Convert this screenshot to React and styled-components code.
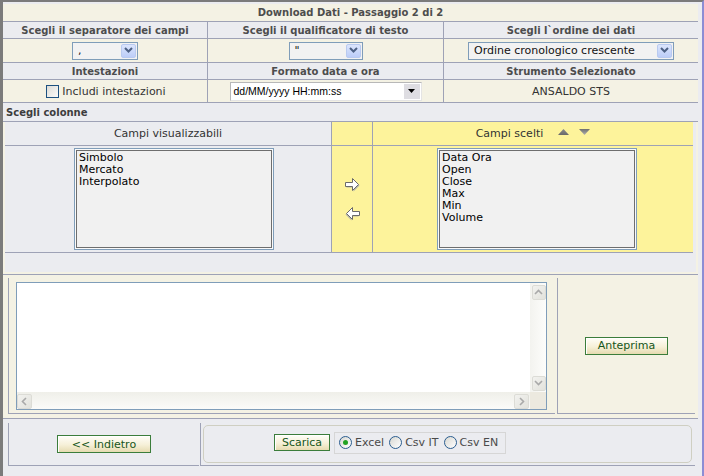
import React from 'react';
import styled, { createGlobalStyle } from 'styled-components';

const GRAY = '#ebecf0';
const CREAM = '#f4f2e4';
const YELLOW = '#fdf39b';
const LINE = '#9ea2b6';

const GlobalStyle = createGlobalStyle`
  *, *::before, *::after { box-sizing: border-box; }
  html, body { margin: 0; padding: 0; background: #fff; }
  body {
    font-family: "DejaVu Sans", Verdana, sans-serif;
    font-size: 11px;
    color: #222;
  }
`;

const Frame = styled.div`
  width: 704px;
  height: 476px;
  overflow: hidden;
  background: ${GRAY};
  border-top: 2px solid #7b7b7b;
  border-left: 3px solid #7b7b7b;
  border-right: 2px solid #8c8dd4;
  padding: 2px 4px 0 0;
  display: flex;
  flex-direction: column;
`;

const Title = styled.div`
  height: 18px;
  flex: none;
  background: ${CREAM};
  border-bottom: 1px solid ${LINE};
  display: flex;
  align-items: center;
  justify-content: center;
  font-weight: bold;
  font-size: 10px;
  color: #4d4d4d;
`;

const Options = styled.div`
  display: grid;
  grid-template-columns: 205px 236px 254px;
  grid-template-rows: 17px 24px 17px 23px;
  flex: none;
`;

const Cell = styled.div`
  display: flex;
  align-items: center;
  justify-content: center;
  gap: 3px;
  background: ${p => (p.$head ? GRAY : CREAM)};
  border-bottom: 1px solid ${LINE};
  border-right: ${p => (p.$last ? 'none' : `1px solid ${LINE}`)};
  font-weight: ${p => (p.$head ? 'bold' : 'normal')};
  font-size: ${p => (p.$head ? '10px' : '11px')};
  color: ${p => (p.$head ? '#4d4d4d' : '#333')};
`;

const XpSelect = styled.div`
  width: ${p => p.$w}px;
  height: 18px;
  border: 1px solid #7f9db9;
  background: #f2f2f2;
  display: flex;
  align-items: center;
  justify-content: space-between;
  padding: 1px 1px 1px 5px;
  font-size: 11px;
  color: #111;
`;

const XpArrow = styled.span`
  width: 15px;
  height: 14px;
  border-radius: 2px;
  border: 1px solid #b9caf0;
  background: linear-gradient(#dbe5fd, #bccdf8);
  display: flex;
  align-items: center;
  justify-content: center;
`;

const ClassicSelect = styled.div`
  width: 192px;
  height: 19px;
  border: 1px solid #b8b8b8;
  border-bottom-color: #e4e4e4;
  border-right-color: #e4e4e4;
  background: #fff;
  display: flex;
  align-items: center;
  justify-content: space-between;
  padding: 1px;
  font-family: "Liberation Sans", Arial, sans-serif;
  font-size: 10.5px;
  color: #000;
  span:first-child { padding-left: 2px; }
`;

const ClassicArrow = styled.span`
  width: 16px;
  height: 100%;
  background: #dedde2;
  display: flex;
  align-items: center;
  justify-content: center;
`;

const Check = styled.span`
  width: 13px;
  height: 13px;
  margin-left: 2px;
  border: 1px solid #1c5180;
  background: linear-gradient(135deg, #dcdcd7, #fbfbf9);
`;

const SectionLabel = styled.div`
  height: 20px;
  flex: none;
  margin-top: -1px;
  border-top: 1px solid ${LINE};
  border-bottom: 1px solid ${LINE};
  padding-left: 3px;
  display: flex;
  align-items: center;
  font-weight: bold;
  font-size: 10px;
  color: #3d3d3d;
`;

const ColumnsBox = styled.div`
  height: 152px;
  flex: none;
  border: 0 solid ${CREAM};
  border-width: 0 2px 2px 2px;
  padding-right: 3px;
`;

const ColumnsTable = styled.div`
  display: grid;
  grid-template-columns: 327px 41px 1fr;
  grid-template-rows: 24px 107px;
`;

const ColCell = styled.div`
  background: ${p => (p.$yellow ? YELLOW : GRAY)};
  border-bottom: 1px solid ${LINE};
  border-right: ${p => (p.$last ? 'none' : `1px solid ${LINE}`)};
  display: flex;
  align-items: center;
  justify-content: ${p => p.$justify || 'center'};
  flex-direction: ${p => p.$dir || 'row'};
  gap: ${p => p.$gap || 0}px;
  padding-left: ${p => p.$pl || 0}px;
  color: #333;
  font-size: 11px;
`;

const ListBox = styled.div`
  width: 200px;
  height: 102px;
  border: 1px solid #7f9db9;
  background: #f1f1f1;
  box-shadow: inset 0 0 0 1px #fafafa, inset 0 0 0 2px #6e6e6e;
  padding: 3px 4px 0;
  line-height: 12px;
  font-size: 11px;
  color: #000;
`;

const SortArrows = styled.span`
  display: inline-flex;
  gap: 10px;
  margin-left: 15px;
  margin-top: -3px;
`;

const PreviewRow = styled.div`
  height: 145px;
  flex: none;
  background: ${CREAM};
  border-top: 1px solid ${LINE};
  border-bottom: 1px solid ${LINE};
  padding: 3px 3px 4px 5px;
  display: flex;
  gap: 2px;
`;

const PreviewCell = styled.div`
  width: 547px;
  border-left: 1px solid ${LINE};
  border-bottom: 1px solid ${LINE};
  padding: 4px 8px 3px 7px;
`;

const PreviewSide = styled.div`
  flex: 1;
  border-left: 1px solid ${LINE};
  border-bottom: 1px solid ${LINE};
  display: flex;
  align-items: center;
  justify-content: center;
`;

const TextArea = styled.div`
  width: 531px;
  height: 128px;
  border: 1px solid #7f9db9;
  background: #fff;
  display: grid;
  grid-template-columns: 1fr 16px;
  grid-template-rows: 1fr 17px;
`;

const VScroll = styled.div`
  background: linear-gradient(90deg, #f3f3ef, #fdfdfb);
  display: flex;
  flex-direction: column;
  justify-content: space-between;
  align-items: center;
  padding: 2px 0 1px 1px;
`;

const HScroll = styled.div`
  background: linear-gradient(#efefe9, #fbfbf9);
  display: flex;
  justify-content: space-between;
  align-items: center;
  padding: 1px 1px 0 0;
`;

const Corner = styled.div`
  background: #ece9df;
`;

const ScrollBtn = styled.span`
  width: ${p => p.$w || 15}px;
  height: 15px;
  border-radius: 2px;
  border: 1px solid #dcdcd6;
  background: linear-gradient(135deg, #f2f2ef, #e2e2dc);
  display: flex;
  align-items: center;
  justify-content: center;
`;

const Footer = styled.div`
  flex: 1;
  display: flex;
  gap: 1px;
  padding: 4px 3px 0 5px;
  align-items: flex-start;
`;

const BackCell = styled.div`
  width: 191px;
  height: 43px;
  border-left: 1px solid ${LINE};
  border-bottom: 1px solid ${LINE};
  display: flex;
  align-items: center;
  justify-content: center;
`;

const ExportCell = styled.div`
  flex: 1;
  height: 43px;
  border-left: 1px solid ${LINE};
  border-bottom: 1px solid ${LINE};
  padding: 2px 3px 2px 2px;
`;

const ExportBox = styled.div`
  height: 100%;
  border: 1px solid #cfcfc2;
  border-radius: 5px;
  display: flex;
  align-items: center;
  padding: 0 0 3px 70px;
  gap: 4px;
`;

const Button = styled.button`
  width: ${p => p.$w}px;
  height: ${p => p.$h || 17}px;
  padding: 0;
  border: 1px solid #3b7d3b;
  background: linear-gradient(#fffef9, #f6f0d8 55%, #e6dbb0);
  box-shadow: inset 1px 1px 0 #fff;
  color: #16561a;
  font-family: "DejaVu Sans", Verdana, sans-serif;
  font-size: 11px;
  line-height: 1;
  cursor: pointer;
`;

const RadioGroup = styled.div`
  width: 172px;
  height: 22px;
  border: 1px solid #d6d6d6;
  display: flex;
  align-items: center;
  padding-left: 4px;
  color: #4a4a4a;
  font-size: 11px;
`;

const RadioItem = styled.label`
  display: inline-flex;
  align-items: center;
  gap: 3px;
  margin-right: 5px;
`;

const Radio = styled.span`
  width: 13px;
  height: 13px;
  border-radius: 50%;
  border: 1px solid #2a5d8f;
  background: linear-gradient(135deg, #d8d8d2, #ffffff);
  display: flex;
  align-items: center;
  justify-content: center;
  &::after {
    content: '';
    display: ${p => (p.$on ? 'block' : 'none')};
    width: 5px;
    height: 5px;
    border-radius: 50%;
    background: #22a322;
  }
`;

const Chevron = ({ dir = 'down', color = '#4d6185', w = 2 }) => {
  const paths = {
    down: 'M1 2 L4.5 5.5 L8 2',
    up: 'M1 6 L4.5 2.5 L8 6',
    left: 'M6 1 L2.5 4.5 L6 8',
    right: 'M3 1 L6.5 4.5 L3 8',
  };
  return (
    <svg width="9" height="9" viewBox="0 0 9 9">
      <path d={paths[dir]} fill="none" stroke={color} strokeWidth={w} />
    </svg>
  );
};

const BlockArrow = ({ left }) => (
  <svg width="17" height="16" viewBox="0 0 17 16" style={left ? { transform: 'scaleX(-1)' } : undefined}>
    <path d="M2.5 6.5 H9.5 V2.5 L15.5 8.5 L9.5 14.5 V10.5 H2.5 Z" fill="#b5b5a8" />
    <path d="M1.5 5.5 H8.5 V1.5 L14.5 7.5 L8.5 13.5 V9.5 H1.5 Z" fill="#fff" stroke="#6a6a6a" strokeWidth="1" />
  </svg>
);

const Tri = ({ up }) => (
  <svg width="11" height="6" viewBox="0 0 11 6">
    <defs>
      <linearGradient id={up ? 'tu' : 'td'} x1="0" y1="0" x2="0" y2="1">
        <stop offset="0" stopColor={up ? '#8a8a8a' : '#6f6f6f'} />
        <stop offset="1" stopColor={up ? '#6a6a6a' : '#b0b0b0'} />
      </linearGradient>
    </defs>
    <polygon points={up ? '0,6 5.5,0 11,6' : '0,0 5.5,6 11,0'} fill={`url(#${up ? 'tu' : 'td'})`} />
  </svg>
);

const available = ['Simbolo', 'Mercato', 'Interpolato'];
const chosen = ['Data Ora', 'Open', 'Close', 'Max', 'Min', 'Volume'];

export default function App() {
  return (
    <>
      <GlobalStyle />
      <Frame>
        <Title>Download Dati - Passaggio 2 di 2</Title>
        <Options>
          <Cell $head>Scegli il separatore dei campi</Cell>
          <Cell $head>Scegli il qualificatore di testo</Cell>
          <Cell $head $last>Scegli l`ordine dei dati</Cell>

          <Cell>
            <XpSelect $w={66}>
              <span>,</span>
              <XpArrow><Chevron /></XpArrow>
            </XpSelect>
          </Cell>
          <Cell>
            <XpSelect $w={74}>
              <span>"</span>
              <XpArrow><Chevron /></XpArrow>
            </XpSelect>
          </Cell>
          <Cell $last>
            <XpSelect $w={206}>
              <span>Ordine cronologico crescente</span>
              <XpArrow><Chevron /></XpArrow>
            </XpSelect>
          </Cell>

          <Cell $head>Intestazioni</Cell>
          <Cell $head>Formato data e ora</Cell>
          <Cell $head $last>Strumento Selezionato</Cell>

          <Cell>
            <Check />
            <span>Includi intestazioni</span>
          </Cell>
          <Cell>
            <ClassicSelect>
              <span>dd/MM/yyyy HH:mm:ss</span>
              <ClassicArrow>
                <svg width="7" height="4" viewBox="0 0 7 4"><polygon points="0,0 7,0 3.5,4" fill="#000" /></svg>
              </ClassicArrow>
            </ClassicSelect>
          </Cell>
          <Cell $last>ANSALDO STS</Cell>
        </Options>

        <SectionLabel>Scegli colonne</SectionLabel>

        <ColumnsBox>
          <ColumnsTable>
            <ColCell>Campi visualizzabili</ColCell>
            <ColCell $yellow />
            <ColCell $yellow $last>
              Campi scelti
              <SortArrows>
                <Tri up />
                <Tri />
              </SortArrows>
            </ColCell>

            <ColCell $justify="flex-start" $pl={69}>
              <ListBox>
                {available.map(v => <div key={v}>{v}</div>)}
              </ListBox>
            </ColCell>
            <ColCell $yellow $dir="column" $gap={13}>
              <BlockArrow />
              <BlockArrow left />
            </ColCell>
            <ColCell $yellow $last $justify="flex-start" $pl={64}>
              <ListBox>
                {chosen.map(v => <div key={v}>{v}</div>)}
              </ListBox>
            </ColCell>
          </ColumnsTable>
        </ColumnsBox>

        <PreviewRow>
          <PreviewCell>
            <TextArea>
              <div />
              <VScroll>
                <ScrollBtn $w={14}><Chevron dir="up" color="#a9a9a9" w={1.6} /></ScrollBtn>
                <ScrollBtn $w={14}><Chevron dir="down" color="#a9a9a9" w={1.6} /></ScrollBtn>
              </VScroll>
              <HScroll>
                <ScrollBtn><Chevron dir="left" color="#a9a9a9" w={1.6} /></ScrollBtn>
                <ScrollBtn><Chevron dir="right" color="#a9a9a9" w={1.6} /></ScrollBtn>
              </HScroll>
              <Corner />
            </TextArea>
          </PreviewCell>
          <PreviewSide>
            <Button $w={83} $h={18}>Anteprima</Button>
          </PreviewSide>
        </PreviewRow>

        <Footer>
          <BackCell>
            <Button $w={94} $h={18}>&lt;&lt; Indietro</Button>
          </BackCell>
          <ExportCell>
            <ExportBox>
              <Button $w={56} $h={17}>Scarica</Button>
              <RadioGroup>
                <RadioItem><Radio $on />Excel</RadioItem>
                <RadioItem><Radio />Csv IT</RadioItem>
                <RadioItem><Radio />Csv EN</RadioItem>
              </RadioGroup>
            </ExportBox>
          </ExportCell>
        </Footer>
      </Frame>
    </>
  );
}
